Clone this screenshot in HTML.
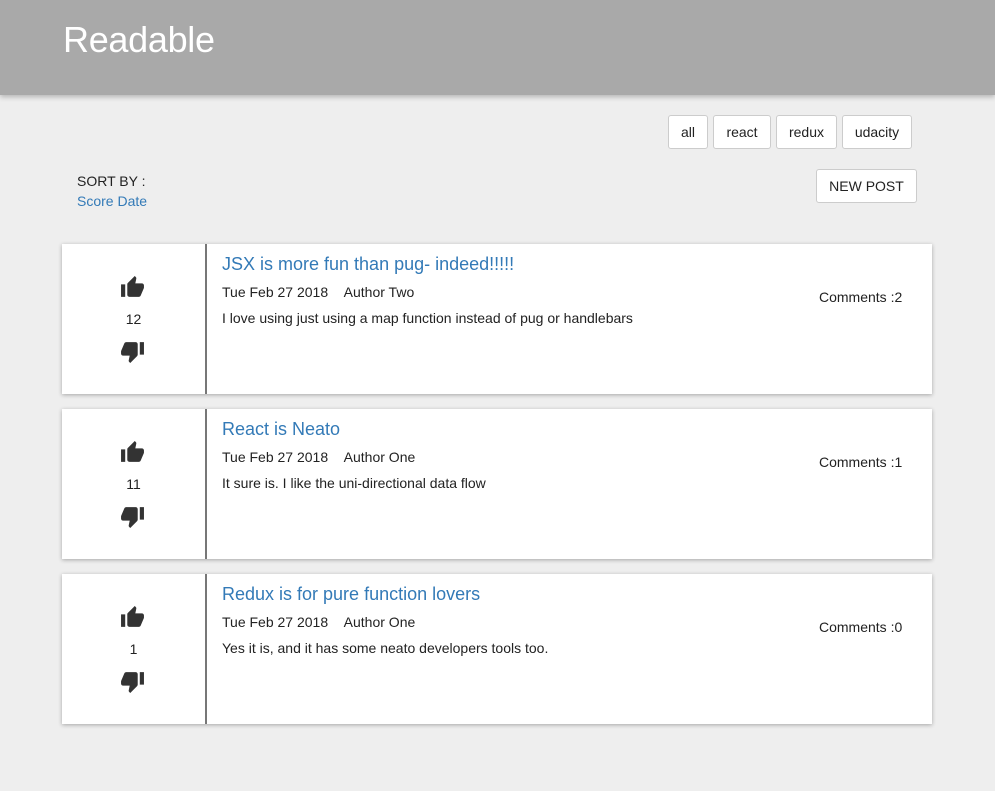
<!DOCTYPE html>
<html><head><meta charset="utf-8"><style>
*{box-sizing:border-box}
body{margin:0;width:995px;height:791px;background:#eeeeee;font-family:"Liberation Sans",Arial,sans-serif;color:#222;overflow:hidden;position:relative}
.hdr{position:absolute;left:0;top:0;width:995px;height:95px;background:#a9a9a9;box-shadow:0 2px 5px rgba(0,0,0,.25)}
.hdr h1{position:absolute;left:63px;top:19px;margin:0;font-weight:normal;font-size:36px;color:#fff;letter-spacing:-0.3px}
.btn{position:absolute;background:#fff;border:1px solid #ccc;border-radius:3px;font-size:14px;text-align:center;color:#222}
.sort{position:absolute;left:77px;top:171px;font-size:14px;line-height:20px}
.sort a{color:#337ab7}
.card{position:absolute;left:62px;width:870px;height:150px;background:#fff;box-shadow:0 1px 4px rgba(0,0,0,.3)}
.card .div{position:absolute;left:143px;top:0;width:2px;height:150px;background:#777}
.card svg{position:absolute;left:58px;width:25px;height:25px}
.score{position:absolute;left:0;width:143px;top:67px;text-align:center;font-size:14px}
.t{position:absolute;left:160px;top:10px;font-size:18px;color:#337ab7}
.d{position:absolute;left:160px;top:40px;font-size:14px}
.b{position:absolute;left:160px;top:66px;font-size:14px}
.c{position:absolute;left:757px;top:45px;font-size:14px}
</style></head><body>
<div class="hdr"><h1>Readable</h1></div>
<div class="btn" style="left:668px;top:115px;width:40px;height:34px;line-height:32px">all</div>
<div class="btn" style="left:713px;top:115px;width:58px;height:34px;line-height:32px">react</div>
<div class="btn" style="left:776px;top:115px;width:61px;height:34px;line-height:32px">redux</div>
<div class="btn" style="left:842px;top:115px;width:70px;height:34px;line-height:32px">udacity</div>
<div class="btn" style="left:816px;top:169px;width:101px;height:34px;line-height:32px">NEW POST</div>
<div class="sort">SORT BY :<br><a>Score Date</a></div>

<div class="card" style="top:244px"><div class="div"></div>
<svg style="top:31px" viewBox="0 0 24 24"><path fill="#333" d="M1 21h4V9H1v12zm22-11c0-1.1-.9-2-2-2h-6.31l.95-4.57.03-.32c0-.41-.17-.79-.44-1.06L14.17 1 7.59 7.59C7.22 7.95 7 8.45 7 9v10c0 1.1.9 2 2 2h9c.83 0 1.54-.5 1.84-1.22l3.02-7.05c.09-.23.14-.47.14-.73v-2z"/></svg>
<div class="score">12</div>
<svg style="top:95px" viewBox="0 0 24 24"><path fill="#333" d="M15 3H6c-.83 0-1.54.5-1.84 1.22l-3.02 7.05c-.09.23-.14.47-.14.73v2c0 1.1.9 2 2 2h6.31l-.95 4.57-.03.32c0 .41.17.79.44 1.06L9.83 23l6.59-6.59c.36-.36.58-.86.58-1.41V5c0-1.1-.9-2-2-2zm4 0v12h4V3h-4z"/></svg>
<div class="t">JSX is more fun than pug- indeed!!!!!</div>
<div class="d">Tue Feb 27 2018&nbsp;&nbsp;&nbsp;&nbsp;Author Two</div>
<div class="b">I love using just using a map function instead of pug or handlebars</div>
<div class="c">Comments :2</div></div>

<div class="card" style="top:409px"><div class="div"></div>
<svg style="top:31px" viewBox="0 0 24 24"><path fill="#333" d="M1 21h4V9H1v12zm22-11c0-1.1-.9-2-2-2h-6.31l.95-4.57.03-.32c0-.41-.17-.79-.44-1.06L14.17 1 7.59 7.590C7.22 7.95 7 8.45 7 9v10c0 1.1.9 2 2 2h9c.83 0 1.54-.5 1.84-1.22l3.02-7.05c.09-.23.14-.47.14-.73v-2z"/></svg>
<div class="score">11</div>
<svg style="top:95px" viewBox="0 0 24 24"><path fill="#333" d="M15 3H6c-.83 0-1.54.5-1.84 1.22l-3.02 7.05c-.09.23-.14.47-.14.73v2c0 1.1.9 2 2 2h6.31l-.95 4.57-.03.32c0 .41.17.79.44 1.06L9.83 23l6.59-6.59c.36-.36.58-.86.58-1.410V5c0-1.1-.9-2-2-2zm4 0v12h4V3h-4z"/></svg>
<div class="t">React is Neato</div>
<div class="d">Tue Feb 27 2018&nbsp;&nbsp;&nbsp;&nbsp;Author One</div>
<div class="b">It sure is. I like the uni-directional data flow</div>
<div class="c">Comments :1</div></div>

<div class="card" style="top:574px"><div class="div"></div>
<svg style="top:31px" viewBox="0 0 24 24"><path fill="#333" d="M1 21h4V9H1v12zm22-11c0-1.1-.9-2-2-2h-6.31l.95-4.57.03-.32c0-.41-.17-.79-.44-1.06L14.17 1 7.59 7.59C7.22 7.95 7 8.45 7 9v10c0 1.1.9 2 2 2h9c.83 0 1.54-.5 1.84-1.22l3.02-7.05c.09-.23.14-.47.14-.73v-2z"/></svg>
<div class="score">1</div>
<svg style="top:95px" viewBox="0 0 24 24"><path fill="#333" d="M15 3H6c-.83 0-1.54.5-1.84 1.22l-3.02 7.05c-.09.23-.14.47-.14.73v2c0 1.1.9 2 2 2h6.31l-.95 4.57-.03.32c0 .41.17.79.44 1.06L9.83 23l6.59-6.59c.36-.36.58-.86.58-1.41V5c0-1.1-.9-2-2-2zm4 0v12h4V3h-4z"/></svg>
<div class="t">Redux is for pure function lovers</div>
<div class="d">Tue Feb 27 2018&nbsp;&nbsp;&nbsp;&nbsp;Author One</div>
<div class="b">Yes it is, and it has some neato developers tools too.</div>
<div class="c">Comments :0</div></div>
</body></html>
